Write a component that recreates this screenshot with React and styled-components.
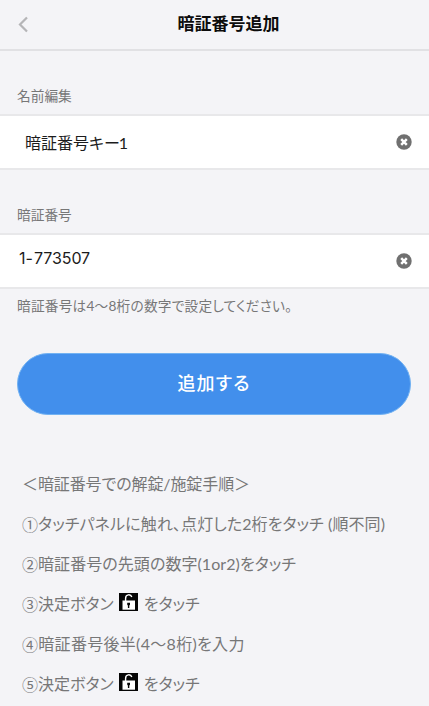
import React from 'react';
import styled, { createGlobalStyle } from 'styled-components';

const GlobalStyle = createGlobalStyle`
  * {
    box-sizing: border-box;
  }
  body {
    margin: 0;
    background: #f4f4f7;
    overflow: hidden;
  }
`;

const Page = styled.div`
  width: 100%;
  height: 706px;
  overflow: hidden;
  background: #f4f4f7;
  color: #777777;
  font-family: Lato, 'Noto Sans CJK JP', sans-serif;
  font-feature-settings: 'palt';
  white-space: nowrap;
`;

const Header = styled.header`
  display: grid;
  grid-template-columns: 40px 1fr 12px;
  align-items: center;
  height: 51px;
  padding: 0 0 2px;
  border-bottom: 2px solid #e1e1e4;
`;

const Back = styled.svg`
  width: 12px;
  height: 18px;
  margin-left: 17px;
`;

const Title = styled.h1`
  margin: 0;
  color: #0c0c0c;
  font-size: 17px;
  font-weight: 700;
  line-height: 24px;
  text-align: center;
`;

const Label = styled.div`
  padding: 35px 17px 0;
  height: 63px;
  font-size: 13.7px;
  line-height: 20px;
`;

const Field = styled.div`
  display: flex;
  justify-content: space-between;
  align-items: center;
  height: 56px;
  padding: 0 17px 0 ${props => props.$left}px;
  background: #ffffff;
  border-top: 2px solid #e8e8ea;
  border-bottom: 2px solid #e8e8ea;
`;

const Value = styled.span`
  color: #1c1c1c;
  font-size: 16px;
  line-height: 24px;
  padding-top: 1px;
`;

const Code = styled.span`
  color: #1c1c1c;
  font-family: Inter, sans-serif;
  font-size: 16px;
  line-height: 24px;
  letter-spacing: -0.1px;
  word-spacing: -3px;
  padding-bottom: 6px;
`;

const Tail = styled.span`
  margin-left: -1px;
`;

const Clear = styled.svg`
  width: 16px;
  height: 16px;
`;

const Note = styled.p`
  margin: 0;
  padding: 7px 17px 0;
  font-size: 13.7px;
  line-height: 20px;
  letter-spacing: 0.2px;
`;

const Submit = styled.button`
  display: block;
  width: 394px;
  height: 62px;
  margin: 37px 0 0 17px;
  padding: 0 0 4px;
  border: 1px solid #72b2f2;
  border-radius: 31px;
  background: #428fec;
  color: #ffffff;
  font-family: inherit;
  font-feature-settings: inherit;
  font-size: 18px;
  font-weight: 500;
  letter-spacing: 1.2px;
`;

const Steps = styled.div`
  display: flex;
  flex-direction: column;
  padding: 49px 22px 0;
`;

const Step = styled.div`
  display: flex;
  align-items: center;
  height: 40px;
  font-size: 16px;
  line-height: 24px;
  white-space: pre;
  letter-spacing: ${props => props.$spacing || 0}px;
`;

const Mark = styled.span`
  font-family: 'Noto Sans CJK JP', sans-serif;
`;

const Lock = styled.svg`
  width: 19px;
  height: 18px;
  margin: 0 6px 5px 5px;
`;

const ClearIcon = () => (
  <Clear viewBox="0 0 16 16">
    <circle cx="8" cy="8" r="7.7" fill="#707070" />
    <path d="M5.2 5.2l5.6 5.6M10.8 5.2l-5.6 5.6" stroke="#fff" strokeWidth="2.5" />
  </Clear>
);

const LockIcon = () => (
  <Lock viewBox="0 0 19 18">
    <path d="M0 0h19v18H0z" fill="#050505" />
    <path d="M6.6 8V5.4C6.6 .9 11.8 .9 12.8 4" fill="none" stroke="#fff" strokeWidth="1.4" />
    <path d="M3.5 7.5h12.5v9.2H3.5z" fill="#fff" />
    <path d="M8.2 9.8h2.8v2l-.7.8V15H8.9v-2.4l-.7-.8z" fill="#050505" />
  </Lock>
);

const App = () => (
  <>
    <GlobalStyle />
    <Page>
      <Header>
        <Back viewBox="0 0 12 18">
          <path d="M10 2.5L3 9.5l7 7" fill="none" stroke="#b5b5b7" strokeWidth="2.2" />
        </Back>
        <Title>暗証番号追加</Title>
      </Header>
      <Label>名前編集</Label>
      <Field $left={25}>
        <Value>暗証番号キー<Tail>1</Tail></Value>
        <ClearIcon />
      </Field>
      <Label>暗証番号</Label>
      <Field $left={19}>
        <Code>1- 773507</Code>
        <ClearIcon />
      </Field>
      <Note>暗証番号は4〜8桁の数字で設定してください。</Note>
      <Submit>追加する</Submit>
      <Steps>
        <Step $spacing={-0.1}>＜暗証番号での解錠/施錠手順＞</Step>
        <Step $spacing={0.08}><Mark>①</Mark>タッチパネルに触れ、点灯した2桁をタッチ (順不同)</Step>
        <Step $spacing={0.06}><Mark>②</Mark>暗証番号の先頭の数字(1or2)をタッチ</Step>
        <Step><Mark>③</Mark>決定ボタン<LockIcon />をタッチ</Step>
        <Step $spacing={0.3}><Mark>④</Mark>暗証番号後半(4〜8桁)を入力</Step>
        <Step><Mark>⑤</Mark>決定ボタン<LockIcon />をタッチ</Step>
      </Steps>
    </Page>
  </>
);

export default App;
